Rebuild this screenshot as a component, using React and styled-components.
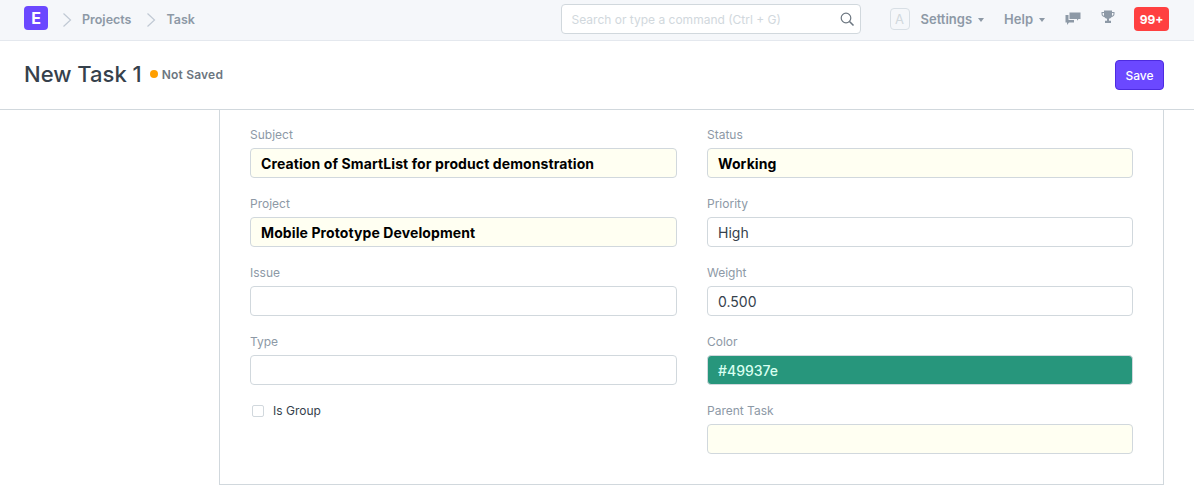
import styled, { createGlobalStyle } from 'styled-components';

const GlobalStyle = createGlobalStyle`
  html, body {
    margin: 0;
    padding: 0;
    background: #fff;
    font-family: Inter, "Liberation Sans", sans-serif;
    overflow: hidden;
  }
`;

const Page = styled.div`
  width: 1194px;
  height: 486px;
  overflow: hidden;
`;

const Navbar = styled.header`
  height: 40px;
  background: #f5f7fa;
  border-bottom: 1px solid #e4e8ee;
  display: flex;
  align-items: center;
  padding: 0 25px 0 24px;
`;

const Logo = styled.div`
  width: 24px;
  height: 24px;
  margin-top: -4px;
  border-radius: 4px;
  background: #6b48ff;
  color: #fff;
  font-size: 16px;
  font-weight: 700;
  display: flex;
  align-items: center;
  justify-content: center;
`;

const Crumbs = styled.nav`
  display: flex;
  align-items: center;
  margin-left: 14px;
  margin-top: -1px;
`;

const Crumb = styled.span`
  font-size: 12.5px;
  font-weight: 600;
  color: #8d99a6;
  margin: 0 15px 0 9px;
`;

const Chevron = () => (
  <svg width="11" height="16" viewBox="0 0 11 16" fill="none">
    <path d="M1.5 1.5 L8.5 8 L1.5 14.5" stroke="#c0c9d4" strokeWidth="1.2" />
  </svg>
);

const Search = styled.div`
  width: 300px;
  height: 30px;
  box-sizing: border-box;
  margin-left: auto;
  margin-top: -2px;
  background: #fff;
  border: 1px solid #d1d8dd;
  border-radius: 4px;
  display: flex;
  align-items: center;
  justify-content: space-between;
  padding: 0 5px 0 10px;
  font-size: 12px;
  color: #d1d8dd;
`;

const NavRight = styled.div`
  display: flex;
  align-items: center;
  margin-left: 29px;
  margin-top: -2px;
`;

const Avatar = styled.div`
  width: 20px;
  height: 22px;
  box-sizing: border-box;
  border: 1px solid #d8dfe5;
  border-radius: 4px;
  color: #d1d8dd;
  font-size: 13px;
  display: flex;
  align-items: center;
  justify-content: center;
  margin-right: 11px;
`;

const NavLink = styled.span`
  display: flex;
  align-items: center;
  gap: 6px;
  font-size: 13px;
  font-weight: 600;
  color: #8d99a6;
  margin-right: 20px;
`;

const Caret = styled.span`
  width: 0;
  height: 0;
  margin-top: 2px;
  border-left: 3.5px solid transparent;
  border-right: 3.5px solid transparent;
  border-top: 4px solid #8d99a6;
`;

const IconSlot = styled.span`
  display: flex;
  margin-right: ${({ $gap }) => $gap}px;
  margin-bottom: ${({ $lift }) => $lift}px;
`;

const Badge = styled.span`
  width: 35px;
  height: 24px;
  border-radius: 4px;
  background: #ff4040;
  color: #fff;
  font-size: 12px;
  font-weight: 700;
  display: flex;
  align-items: center;
  justify-content: center;
`;

const PageHead = styled.div`
  height: 69px;
  box-sizing: border-box;
  border-bottom: 1px solid #d1d8dd;
  display: flex;
  align-items: center;
  padding: 0 30px 0 24px;
`;

const Title = styled.h1`
  margin: 0 0 2px;
  font-size: 22px;
  font-weight: 500;
  color: #36414c;
`;

const Status = styled.span`
  display: flex;
  align-items: center;
  gap: 4px;
  margin: 0 0 2px 8px;
  font-size: 12px;
  font-weight: 600;
  letter-spacing: 0.2px;
  color: #6c7680;
`;

const Dot = styled.span`
  width: 8px;
  height: 8px;
  border-radius: 50%;
  background: #ff9f00;
`;

const SaveButton = styled.button`
  margin-left: auto;
  width: 49px;
  height: 30px;
  padding: 0;
  border: 1px solid #4d2be0;
  border-radius: 4px;
  background: #6b48ff;
  color: #fff;
  font-family: inherit;
  font-size: 12px;
  font-weight: 500;
`;

const FormCard = styled.main`
  width: 945px;
  height: 375px;
  box-sizing: border-box;
  margin-left: 219px;
  border: 1px solid #d1d8dd;
  border-top: 0;
  padding: 16px 30px 0 30px;
  display: grid;
  grid-template-columns: 427px 426px;
  column-gap: 30px;
`;

const Column = styled.div`
  display: flex;
  flex-direction: column;
  gap: 17px;
`;

const Field = styled.div`
  display: flex;
  flex-direction: column;
  gap: 5px;
`;

const Label = styled.label`
  height: 17px;
  line-height: 17px;
  font-size: 12px;
  color: #8d99a6;
`;

const Input = styled.div`
  height: 30px;
  box-sizing: border-box;
  border: 1px solid #d1d8dd;
  border-radius: 4px;
  padding: 0 10px;
  display: flex;
  align-items: center;
  font-size: 14px;
  font-weight: ${({ $bold, $color }) => ($bold ? 700 : $color ? 500 : 400)};
  letter-spacing: ${({ $bold }) => ($bold ? '0.1px' : '0')};
  color: ${({ $bold, $color }) => ($color ? '#d8fff0' : $bold ? '#000' : '#36414c')};
  background: ${({ $color, $mandatory }) => $color || ($mandatory ? '#fffff2' : '#fff')};
`;

const CheckRow = styled.div`
  display: flex;
  align-items: center;
  gap: 9px;
  margin: 1px 0 0 2px;
  font-size: 12px;
  color: #36414c;
`;

const Checkbox = styled.span`
  width: 12px;
  height: 12px;
  box-sizing: border-box;
  border: 1px solid #d1d8dd;
  border-radius: 2px;
  background: #fff;
`;

const App = () => (
  <Page>
    <GlobalStyle />
    <Navbar>
      <Logo>E</Logo>
      <Crumbs>
        <Chevron />
        <Crumb>Projects</Crumb>
        <Chevron />
        <Crumb>Task</Crumb>
      </Crumbs>
      <Search>
        Search or type a command (Ctrl + G)
        <svg width="16" height="16" viewBox="0 0 16 16" fill="none" stroke="#6c7680" strokeWidth="1.2">
          <circle cx="7" cy="7" r="4.8" />
          <path d="M10.5 10.5 L14.5 14.5" strokeWidth="1.6" />
        </svg>
      </Search>
      <NavRight>
        <Avatar>A</Avatar>
        <NavLink>Settings <Caret /></NavLink>
        <NavLink>Help <Caret /></NavLink>
        <IconSlot $gap={20} $lift={0}>
          <svg width="16" height="14" viewBox="0 0 16 14" fill="#8d99a6">
            <path d="M4.5 0.5 H15.5 V7 H13.5 L12 8.8 V7 H4.5 Z" />
            <path d="M0.5 3 H3.5 V8 H9 V10.5 H4 L2 13 V10.5 H0.5 Z" />
          </svg>
        </IconSlot>
        <IconSlot $gap={19} $lift={4}>
          <svg width="14" height="14" viewBox="0 0 14 14" fill="#8d99a6">
            <path d="M3 0.5 H11 V2 H13.5 V4 C13.5 5.8 12 6.8 10.6 7 C10 8 9 8.6 8 8.8 V10.8 H10 V13 H4 V10.8 H6 V8.8 C5 8.6 4 8 3.4 7 C2 6.8 0.5 5.8 0.5 4 V2 H3 Z M1.6 3 V4 C1.6 5 2.3 5.6 3 5.8 V3 Z M11 3 V5.8 C11.7 5.6 12.4 5 12.4 4 V3 Z" fillRule="evenodd" />
          </svg>
        </IconSlot>
        <Badge>99+</Badge>
      </NavRight>
    </Navbar>
    <PageHead>
      <Title>New Task 1</Title>
      <Status><Dot />Not Saved</Status>
      <SaveButton>Save</SaveButton>
    </PageHead>
    <FormCard>
      <Column>
        <Field>
          <Label>Subject</Label>
          <Input $mandatory $bold>Creation of SmartList for product demonstration</Input>
        </Field>
        <Field>
          <Label>Project</Label>
          <Input $mandatory $bold>Mobile Prototype Development</Input>
        </Field>
        <Field>
          <Label>Issue</Label>
          <Input />
        </Field>
        <Field>
          <Label>Type</Label>
          <Input />
        </Field>
        <CheckRow><Checkbox />Is Group</CheckRow>
      </Column>
      <Column>
        <Field>
          <Label>Status</Label>
          <Input $mandatory $bold>Working</Input>
        </Field>
        <Field>
          <Label>Priority</Label>
          <Input>High</Input>
        </Field>
        <Field>
          <Label>Weight</Label>
          <Input>0.500</Input>
        </Field>
        <Field>
          <Label>Color</Label>
          <Input $color="#27967c">#49937e</Input>
        </Field>
        <Field>
          <Label>Parent Task</Label>
          <Input $mandatory />
        </Field>
      </Column>
    </FormCard>
  </Page>
);

export default App;
